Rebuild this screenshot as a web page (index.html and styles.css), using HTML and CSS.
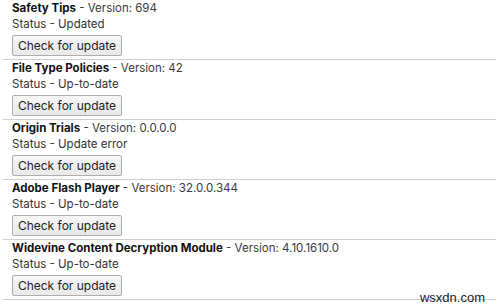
FILE: index.html
```html
<!DOCTYPE html>
<html lang="en">
<head>
  <meta charset="UTF-8">
  <title>Components</title>
  <link rel="stylesheet" href="styles.css">
</head>
<body>

  <div id="components">

    <div class="component">
      <div class="title"><span class="name">Safety Tips</span> - Version: 694</div>
      <div class="status">Status - Updated</div>
      <button class="update-btn">Check for update</button>
    </div>

    <div class="component">
      <div class="title"><span class="name">File Type Policies</span> - Version: 42</div>
      <div class="status">Status - Up-to-date</div>
      <button class="update-btn">Check for update</button>
    </div>

    <div class="component">
      <div class="title"><span class="name">Origin Trials</span> - Version: 0.0.0.0</div>
      <div class="status">Status - Update error</div>
      <button class="update-btn">Check for update</button>
    </div>

    <div class="component">
      <div class="title"><span class="name">Adobe Flash Player</span> - Version: 32.0.0.344</div>
      <div class="status">Status - Up-to-date</div>
      <button class="update-btn">Check for update</button>
    </div>

    <div class="component">
      <div class="title"><span class="name">Widevine Content Decryption Module</span> - Version: 4.10.1610.0</div>
      <div class="status">Status - Up-to-date</div>
      <button class="update-btn">Check for update</button>
    </div>

  </div>

  <div id="watermark">wsxdn.com</div>

</body>
</html>
```

FILE: styles.css
```css
/* Page */
body {
  margin: 0;
  padding: 0 0 0 3px;
  font-family: Inter, "Open Sans", sans-serif;
  font-size: 11.5px;
  color: #333;
  background: #fff;
  overflow: hidden;
}

/* One entry per component */
.component {
  padding: 0 0 3px 9px;
  border-bottom: 1px solid #cfcfcf;
}

.title,
.status {
  height: 16px;
  line-height: 16px;
  white-space: nowrap;
}
.title {
  color: #3a3a3a;
}
.title .name {
  font-weight: bold;
  color: #111;
}

/* Button */
.update-btn {
  display: block;
  margin: 3px 0 0;
  height: 21px;
  width: 110px;
  padding: 0;
  font-family: inherit;
  font-size: 12px;
  color: #222;
  background: linear-gradient(#f6f6f6, #e9e9e9);
  border: 1px solid #adadad;
  border-radius: 2px;
}

/* Site stamp */
#watermark {
  position: absolute;
  right: 11px;
  top: 290px;
  font-family: "Liberation Sans", sans-serif;
  font-size: 13px;
  color: #222;
}
```
